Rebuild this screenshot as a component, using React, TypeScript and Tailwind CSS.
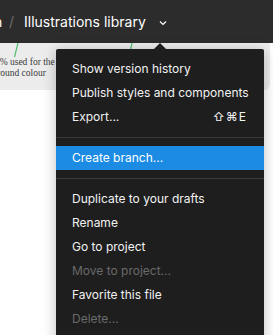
import React from "react";

const Item = ({ label, shortcut, disabled, active }: { label: string; shortcut?: string; disabled?: boolean; active?: boolean }) => (
  <div
    className={`flex h-6 items-center justify-between whitespace-nowrap pl-4 pr-[17px] text-[12px] leading-none ${
      active ? "bg-[#1b8be3] text-white" : disabled ? "text-[#6a6a6a]" : "text-[#f2f2f2]"
    }`}
  >
    <span>{label}</span>
    {shortcut && <span className="tracking-[1px]">{shortcut}</span>}
  </div>
);

const Sep = () => (
  <div className="py-2">
    <div className="h-px bg-[#3a3a3a]" />
  </div>
);

export default function App() {
  return (
    <div
      className="relative h-[335px] w-[273px] overflow-hidden bg-white"
      style={{ fontFamily: "Inter, 'Noto Sans', sans-serif" }}
    >
      <div className="flex h-[43px] items-center whitespace-nowrap bg-[#2c2c2c] text-[14px] text-white">
        <span className="-ml-[6px] w-[9px] overflow-hidden">n</span>
        <span className="ml-[6px] text-[#6e6e6e]">/</span>
        <span className="ml-[10px]">Illustrations library</span>
        <svg className="ml-[13px] mt-[3px]" width="8" height="6" viewBox="0 0 8 6">
          <path d="M1 1.5 L4 4.5 L7 1.5" fill="none" stroke="#ffffff" strokeWidth="1.2" />
        </svg>
      </div>
      <div className="relative h-[47px] w-[270px] rounded-br-[6px] bg-[#ececec]">
        <svg className="absolute left-0 top-0" width="270" height="47">
          <line x1="18" y1="0" x2="14.5" y2="14" stroke="#4cbf6b" strokeWidth="1.2" />
          <line x1="132" y1="0" x2="130.5" y2="7" stroke="#4cbf6b" strokeWidth="1.2" />
        </svg>
        <div
          className="absolute left-[-3px] top-[14px] whitespace-nowrap text-[9.5px] leading-[11px] text-[#3a3a3a]"
          style={{ fontFamily: "'Liberation Serif', serif" }}
        >
          <div>/% used for the background</div>
          <div>round colour</div>
        </div>
      </div>

      <div className="absolute left-[56px] top-[49px] w-[208px] rounded-[2px] bg-[#1e1e1e] py-2 shadow-[0_2px_14px_rgba(0,0,0,0.25)]">
        <svg className="absolute left-[98px] top-[-6px]" width="12" height="6" viewBox="0 0 12 6">
          <path d="M0 6 L6 0 L12 6 Z" fill="#1e1e1e" />
        </svg>
        <Item label="Show version history" />
        <Item label="Publish styles and components" />
        <Item label="Export..." shortcut="⇧⌘E" />
        <Sep />
        <Item label="Create branch..." active />
        <Sep />
        <Item label="Duplicate to your drafts" />
        <Item label="Rename" />
        <Item label="Go to project" />
        <Item label="Move to project..." disabled />
        <Item label="Favorite this file" />
        <Item label="Delete..." disabled />
        <Item label="" />
      </div>
    </div>
  );
}
